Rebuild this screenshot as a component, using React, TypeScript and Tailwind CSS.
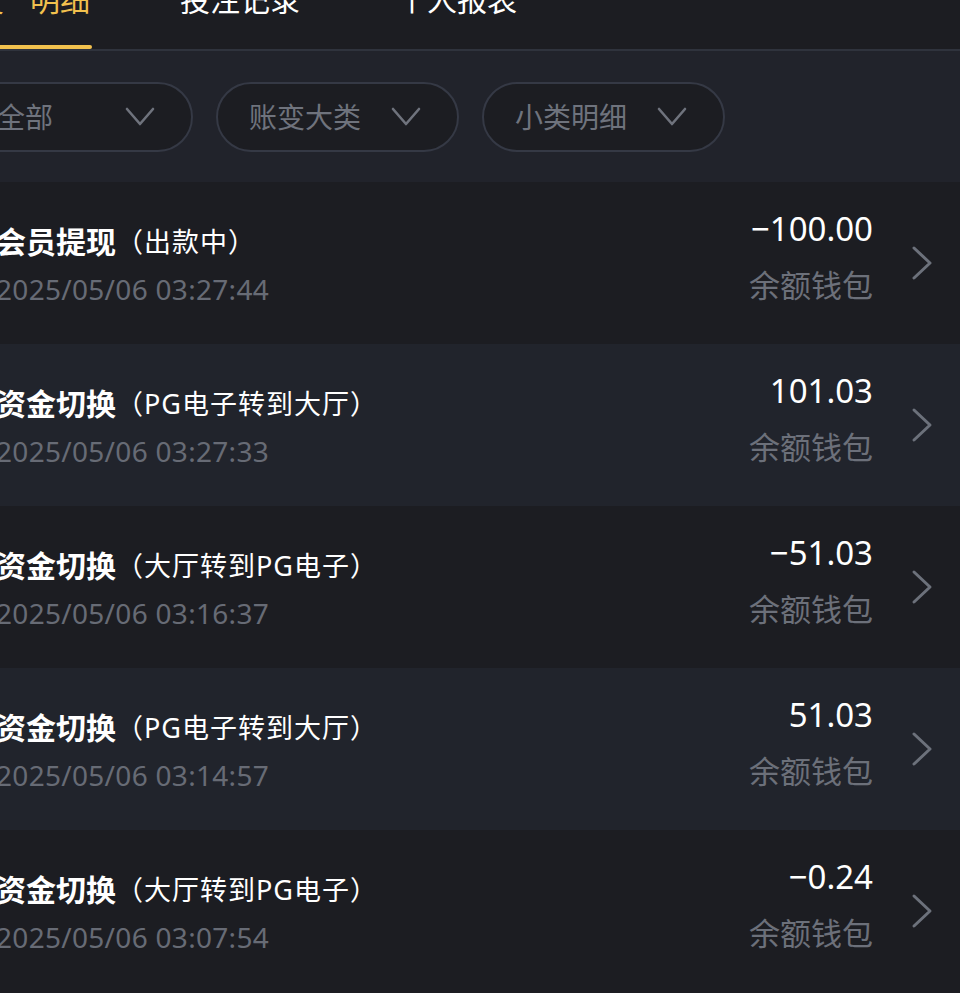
import React from 'react';

const fontStack = "font-['Noto_Sans','Noto_Sans_CJK_SC',sans-serif]";

const records = [
  { title: '会员提现', note: '（出款中）', time: '2025/05/06 03:27:44', amount: '−100.00' },
  { title: '资金切换', note: '（PG电子转到大厅）', time: '2025/05/06 03:27:33', amount: '101.03' },
  { title: '资金切换', note: '（大厅转到PG电子）', time: '2025/05/06 03:16:37', amount: '−51.03' },
  { title: '资金切换', note: '（PG电子转到大厅）', time: '2025/05/06 03:14:57', amount: '51.03' },
  { title: '资金切换', note: '（大厅转到PG电子）', time: '2025/05/06 03:07:54', amount: '−0.24' },
];

const ChevronDown = () => (
  <svg width="30" height="20" viewBox="0 0 30 20" fill="none">
    <path d="M2 2 L15 17 L28 2" stroke="#6f737d" strokeWidth="2.6" strokeLinecap="round" strokeLinejoin="round" />
  </svg>
);

const ChevronRight = () => (
  <svg width="24" height="38" viewBox="0 0 24 38" fill="none" className="ml-[37px] shrink-0">
    <path d="M4 4 L20 19 L4 34" stroke="#6c717b" strokeWidth="3" strokeLinecap="round" strokeLinejoin="round" />
  </svg>
);

const Tabs = () => (
  <div className="flex h-[91px] -mt-[40px] bg-[#1c1d22] border-b-2 border-[#2f333d]">
    <div className="flex flex-col w-[160px] -ml-[68px]">
      <div className="flex-1 flex items-center justify-end pr-[2px] pb-[7px] text-[30px] text-[#f2c14e] whitespace-nowrap">
        <span>账变</span>
        <span className="ml-[26px]">明细</span>
      </div>
      <div className="h-[4px] bg-[#f2c14e] rounded-r-full" />
    </div>
    <div className="flex flex-col w-[122px] ml-[87px]">
      <div className="flex-1 flex items-center justify-center pb-[7px] text-[30px] text-white">投注记录</div>
      <div className="h-[4px]" />
    </div>
    <div className="flex flex-col w-[122px] ml-[95px]">
      <div className="flex-1 flex items-center justify-center pb-[7px] text-[30px] text-white">个人报表</div>
      <div className="h-[4px]" />
    </div>
  </div>
);

const pillClasses = "w-[243px] h-[70px] shrink-0 rounded-full border-2 border-[#353945] bg-[#1c1d22] flex items-center justify-between pr-[36px] text-[28px] text-[#6f737d]";

const Filters = () => (
  <div className="flex gap-[23px] pt-[31px] pb-[30px] bg-[#21232b]">
    <div className={pillClasses + " -ml-[50px] pl-[45px]"}>
      <span>全部</span>
      <ChevronDown />
    </div>
    <div className={pillClasses + " pl-[31px]"}>
      <span>账变大类</span>
      <ChevronDown />
    </div>
    <div className={pillClasses + " pl-[31px]"}>
      <span>小类明细</span>
      <ChevronDown />
    </div>
  </div>
);

const RecordRow = ({ item, index }: { item: typeof records[number]; index: number }) => (
  <div className={"flex items-center h-[162px] pr-[26px] " + (index % 2 === 0 ? "bg-[#1c1d22]" : "bg-[#21242c]")}>
    <div className="flex-1 min-w-0 self-start pt-[38px] -ml-[4px]">
      <div className="flex items-center leading-[44px] whitespace-nowrap">
        <span className="text-[30px] font-bold text-white">{item.title}</span>
        <span className="text-[27px] text-white tracking-[1px]">{item.note}</span>
      </div>
      <div className="mt-[5px] leading-[40px] text-[28px] tracking-[0.3px] text-[#676b75] whitespace-nowrap">{item.time}</div>
    </div>
    <div className="self-start pt-[25px] text-right">
      <div className="leading-[44px] text-[33px] text-white">{item.amount}</div>
      <div className="mt-[12px] leading-[44px] text-[31px] text-[#6c707a]">余额钱包</div>
    </div>
    <ChevronRight />
  </div>
);

const App = () => {
  return (
    <div className={"min-h-screen overflow-hidden bg-[#1c1d22] " + fontStack}>
      <Tabs />
      <Filters />
      <div>
        {records.map((item, i) => (
          <RecordRow key={i} item={item} index={i} />
        ))}
      </div>
    </div>
  );
};

export default App;
